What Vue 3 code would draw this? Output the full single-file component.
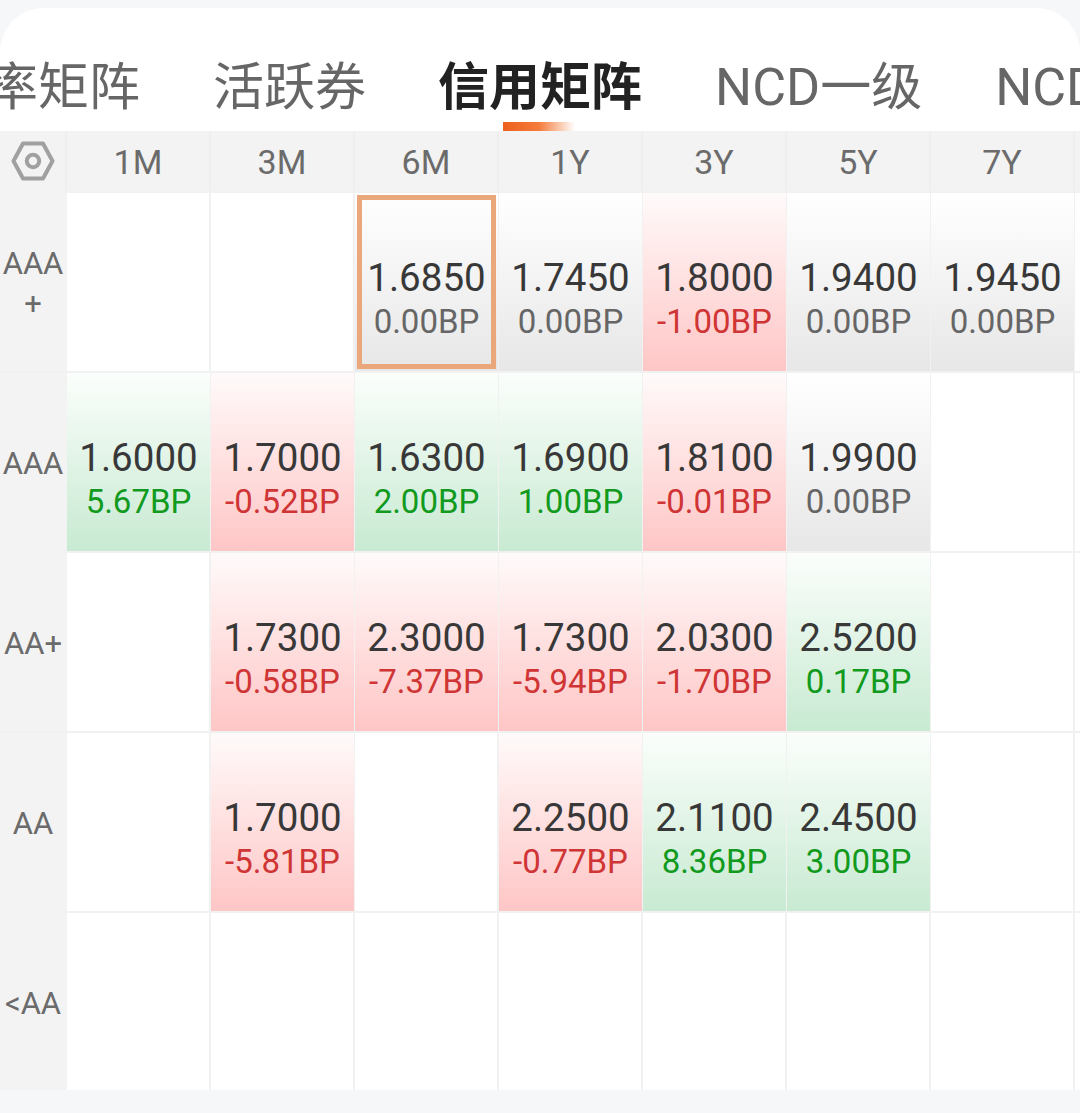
<script setup>
const tabs = [
  { name: '利率矩阵' },
  { name: '活跃券' },
  { name: '信用矩阵', active: true },
  { latin: 'NCD', name: '一级' },
  { latin: 'NCD', name: '二级' }
]
const terms = ['1M', '3M', '6M', '1Y', '3Y', '5Y', '7Y', '']

const rows = [
  {
    label: 'AAA\n+',
    cells: [null, null,
      { v: '1.6850', bp: '0.00BP', selected: true },
      { v: '1.7450', bp: '0.00BP' },
      { v: '1.8000', bp: '-1.00BP' },
      { v: '1.9400', bp: '0.00BP' },
      { v: '1.9450', bp: '0.00BP' },
      null]
  },
  {
    label: 'AAA',
    cells: [
      { v: '1.6000', bp: '5.67BP' },
      { v: '1.7000', bp: '-0.52BP' },
      { v: '1.6300', bp: '2.00BP' },
      { v: '1.6900', bp: '1.00BP' },
      { v: '1.8100', bp: '-0.01BP' },
      { v: '1.9900', bp: '0.00BP' },
      null, null]
  },
  {
    label: 'AA+',
    cells: [null,
      { v: '1.7300', bp: '-0.58BP' },
      { v: '2.3000', bp: '-7.37BP' },
      { v: '1.7300', bp: '-5.94BP' },
      { v: '2.0300', bp: '-1.70BP' },
      { v: '2.5200', bp: '0.17BP' },
      null, null]
  },
  {
    label: 'AA',
    cells: [null,
      { v: '1.7000', bp: '-5.81BP' },
      null,
      { v: '2.2500', bp: '-0.77BP' },
      { v: '2.1100', bp: '8.36BP' },
      { v: '2.4500', bp: '3.00BP' },
      null, null]
  },
  { label: '<AA', cells: Array(8).fill(null) }
]

function tone(cell) {
  if (!cell) return 'empty'
  if (cell.bp.startsWith('-')) return 'down'
  return cell.bp.startsWith('0.00') ? 'flat' : 'up'
}
</script>

<template>
  <div class="page">
    <div class="sheet">
      <div class="tabs">
        <span v-for="(tab, i) in tabs" :key="i" class="tab" :class="{ active: tab.active }">
          <span v-if="tab.latin" class="latin">{{ tab.latin }}</span>{{ tab.name }}
        </span>
      </div>

      <div class="matrix">
        <div class="corner">
          <svg width="44" height="40" viewBox="0 0 44 40" fill="none">
            <path d="M12 2.5H32L41.5 20L32 37.5H12L2.5 20Z" stroke="#a0a0a0" stroke-width="4" stroke-linejoin="round" />
            <circle cx="22" cy="20" r="6.2" stroke="#a0a0a0" stroke-width="4" />
          </svg>
        </div>
        <div v-for="(term, i) in terms" :key="i" class="term">{{ term }}</div>

        <template v-for="row in rows" :key="row.label">
          <div class="grade">{{ row.label }}</div>
          <div
            v-for="(cell, i) in row.cells"
            :key="i"
            class="cell"
            :class="[tone(cell), { selected: cell && cell.selected }]"
          >
            <template v-if="cell">
              <span class="value">{{ cell.v }}</span>
              <span class="bp">{{ cell.bp }}</span>
            </template>
          </div>
        </template>
      </div>
    </div>
  </div>
</template>

<style>
html, body {
  margin: 0;
  background: #f6f7f9;
}
</style>

<style scoped>
.page {
  width: 1080px;
  height: 1113px;
  padding-top: 8px;
  box-sizing: border-box;
  overflow: hidden;
  background: #f6f7f9;
  font-family: Roboto, "Noto Sans CJK SC", sans-serif;
}

.sheet {
  height: 1082px;
  background: #fff;
  border-radius: 44px 44px 0 0;
  overflow: hidden;
}

.tabs {
  display: flex;
  gap: 73px;
  height: 123px;
  padding-top: 43px;
  box-sizing: border-box;
  margin-left: -64px;
  white-space: nowrap;
  font-size: 51px;
  line-height: 74px;
  color: #666;
}

.tab {
  position: relative;
  flex-shrink: 0;
}

.latin {
  font-size: 52px;
}

.tab.active {
  margin-left: -1px;
  font-weight: 700;
  color: #222;
}

.tab.active::after {
  content: '';
  position: absolute;
  left: 65px;
  top: 71px;
  width: 72px;
  height: 9px;
  background: linear-gradient(90deg, #ee5f1c 0%, #f47c3c 50%, rgba(255, 255, 255, 0) 100%);
}

.matrix {
  display: grid;
  grid-template-columns: 67px repeat(8, 144px);
  grid-template-rows: 60px repeat(5, 178px);
  row-gap: 2px;
  background: #f1f1f1;
  padding-bottom: 1px;
}

.corner,
.term {
  display: flex;
  align-items: center;
  justify-content: center;
  background: #f3f3f3;
  box-sizing: border-box;
  border-right: 2px solid #efefef;
}

.term {
  padding-top: 2px;
  font-size: 34px;
  color: #6b6b6b;
}

.grade {
  display: flex;
  align-items: center;
  justify-content: center;
  padding-top: 3px;
  padding-right: 1px;
  box-sizing: border-box;
  text-align: center;
  white-space: pre-line;
  background: #f3f3f3;
  font-size: 31px;
  line-height: 40px;
  color: #6b6b6b;
}

.cell {
  display: flex;
  flex-direction: column;
  align-items: center;
  justify-content: center;
  padding-top: 36px;
  box-sizing: border-box;
  border-right: 1px solid #f1f1f1;
  background: #fff;
}

.cell.empty {
  border-right-width: 2px;
}

.value {
  font-size: 38.5px;
  line-height: 44px;
  color: #383838;
}

.bp {
  font-size: 33px;
  line-height: 44px;
}

.cell.flat {
  background: linear-gradient(180deg, #fff 0%, #e7e7e7 100%);
}

.cell.flat .bp {
  color: #666;
}

.cell.down {
  background: linear-gradient(180deg, #fffafa 0%, #ffc6c6 100%);
}

.cell.down .bp {
  color: #cf3534;
}

.cell.up {
  background: linear-gradient(180deg, #fbfefb 0%, #c8ead2 100%);
}

.cell.up .bp {
  color: #129a1e;
}

.cell.selected {
  position: relative;
}

.cell.selected::after {
  content: '';
  position: absolute;
  inset: 2px 2px 2px 2px;
  border: 5px solid #eba77c;
}
</style>
